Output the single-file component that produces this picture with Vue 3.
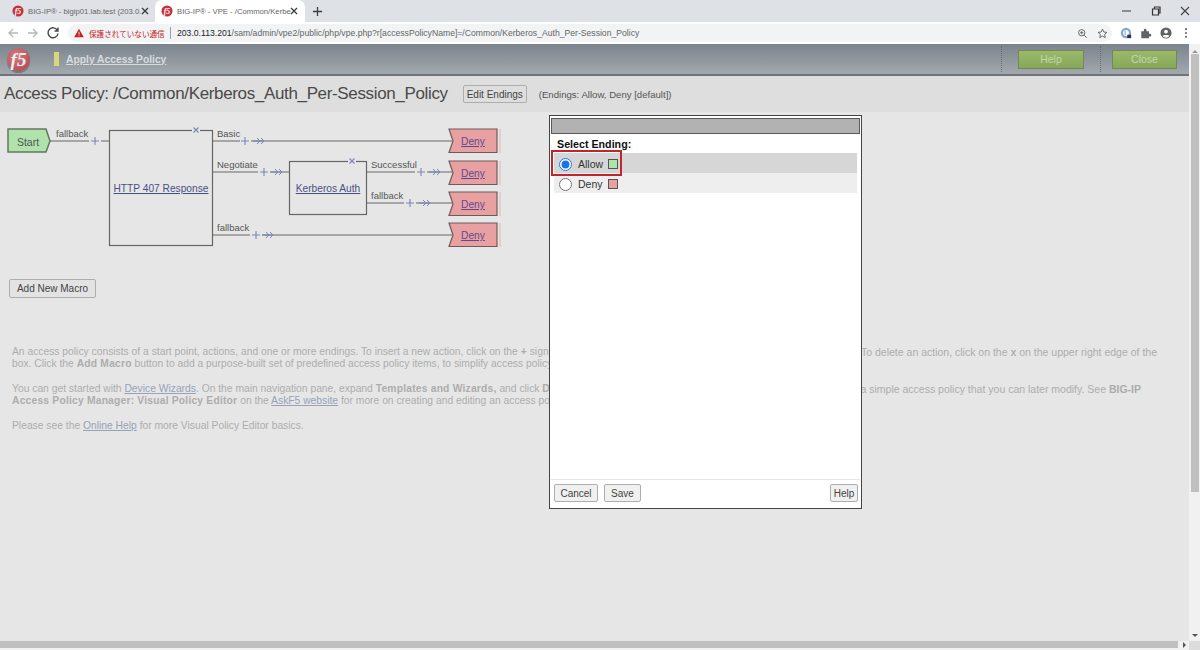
<script setup>
const wires = [
  [50,141,89,141],[101,141,109,141],
  [213,141,240,141],[251,141,452,141],
  [213,172,258,172],[270,172,289,172],
  [367,172,415,172],[427,172,452,172],
  [367,203,404,203],[416,203,452,203],
  [213,235,250,235],[262,235,452,235],
]
const pluses = [[95,141],[245,141],[264,172],[421,172],[410,203],[256,235]]
const arrows = [[258,141],[276,172],[434,172],[424,203],[267,235]]
const closers = [[196,130],[352,161]]
const labels = [
  ['fallback',56,137],['Basic',217,137],['Negotiate',217,168],['fallback',217,231],
  ['Successful',371,168],['fallback',371,199],
]
const denies = [129,161,192,223]
</script>

<template>
  <div class="screen">
    <div class="tabstrip">
      <div class="tab">
        <svg class="fav" viewBox="0 0 14 14"><circle cx="7" cy="7" r="6.5" fill="#c8303c"/><text x="7" y="10" text-anchor="middle" class="favtext">f5</text></svg>
        <span class="tabtitle">BIG-IP® - bigip01.lab.test (203.0.</span>
        <svg class="tabx" viewBox="0 0 10 10"><path d="M2 2l6 6M8 2l-6 6" stroke="#3c4043" stroke-width="1.4"/></svg>
      </div>
      <div class="tab active">
        <svg class="fav" viewBox="0 0 14 14"><circle cx="7" cy="7" r="6.5" fill="#c8303c"/><text x="7" y="10" text-anchor="middle" class="favtext">f5</text></svg>
        <span class="tabtitle">BIG-IP® - VPE - /Common/Kerbe</span>
        <svg class="tabx" viewBox="0 0 10 10"><path d="M2 2l6 6M8 2l-6 6" stroke="#3c4043" stroke-width="1.4"/></svg>
      </div>
      <svg class="newtab" viewBox="0 0 12 12"><path d="M6 1v10M1 6h10" stroke="#3c4043" stroke-width="1.4"/></svg>
      <div class="winctl">
        <svg viewBox="0 0 12 12"><path d="M1 6h9" stroke="#555" stroke-width="1.2"/></svg>
        <svg viewBox="0 0 12 12"><path d="M2.5 4h6v6h-6zM4.5 4V2h5.5v6h-1.5" fill="none" stroke="#333" stroke-width="1.2"/></svg>
        <svg viewBox="0 0 12 12"><path d="M2 2l8 8M10 2l-8 8" stroke="#444" stroke-width="1.1"/></svg>
      </div>
    </div>

    <div class="toolbar">
      <svg class="navicon" viewBox="0 0 14 14"><path d="M12 7H3M7 3L3 7l4 4" fill="none" stroke="#b4b7bb" stroke-width="1.4"/></svg>
      <svg class="navicon" viewBox="0 0 14 14"><path d="M2 7h9M7 3l4 4-4 4" fill="none" stroke="#b4b7bb" stroke-width="1.4"/></svg>
      <svg class="navicon" viewBox="0 0 14 14"><path d="M11.5 4.5A5 5 0 1 0 12 7.5M12 1.5v3.5H8.5" fill="none" stroke="#44474b" stroke-width="1.4"/></svg>
      <div class="omnibox">
        <svg class="warn" viewBox="0 0 12 11"><path d="M6 0.5L11.7 10.5H0.3z" fill="#c5221f"/><path d="M6 4v3.4M6 8.2v1.1" stroke="#fff" stroke-width="1"/></svg>
        <span class="insecure">保護されていない通信</span>
        <span class="omnisep"></span>
        <span class="url"><span class="urlhost">203.0.113.201</span>/sam/admin/vpe2/public/php/vpe.php?r[accessPolicyName]=/Common/Kerberos_Auth_Per-Session_Policy</span>
        <svg class="omniicon first" viewBox="0 0 14 14"><circle cx="6" cy="6" r="4" fill="none" stroke="#555" stroke-width="1.1"/><path d="M9 9l3.5 3.5M4 6h4M6 4v4" stroke="#555" stroke-width="1.1"/></svg>
        <svg class="omniicon" viewBox="0 0 14 14"><path d="M7 1.5l1.7 3.6 3.9.5-2.9 2.7.8 3.9L7 10.3l-3.5 1.9.8-3.9L1.4 5.600l3.900-.5z" fill="none" stroke="#555" stroke-width="1.1"/></svg>
      </div>
      <div class="exts">
        <svg viewBox="0 0 14 14"><circle cx="7" cy="7" r="6" fill="#7da7d8"/><circle cx="7" cy="7" r="3.4" fill="#fff"/><path d="M6 4.500v5" stroke="#7da7d8" stroke-width="1.200"/><rect x="8.500" y="9" width="4.500" height="4" fill="#333"/></svg>
        <svg viewBox="0 0 14 14"><path d="M1.500 5h3V3.500a1.500 1.500 0 0 1 3 0V5h3v3h1.200a1.500 1.500 0 0 1 0 3H10.500v2h-9z" fill="#5f6368"/></svg>
        <svg viewBox="0 0 14 14"><circle cx="7" cy="7" r="6.500" fill="#5f6368"/><circle cx="7" cy="5.300" r="2.200" fill="#fff"/><path d="M3 10.500c1-1.700 7-1.700 8 0a5 5 0 0 1-8 0z" fill="#fff"/></svg>
        <svg viewBox="0 0 14 14"><circle cx="7" cy="2.500" r="1.200" fill="#5f6368"/><circle cx="7" cy="7" r="1.200" fill="#5f6368"/><circle cx="7" cy="11.500" r="1.200" fill="#5f6368"/></svg>
      </div>
    </div>

    <div class="viewport">
      <div class="page">
        <header class="apphead">
          <div class="logo"><span>f5</span></div>
          <span class="applybar"></span>
          <a class="apply">Apply Access Policy</a>
          <span class="dots first"></span>
          <button class="greenbtn">Help</button>
          <span class="dots second"></span>
          <button class="greenbtn close">Close</button>
        </header>

        <div class="titlerow">
          <h1>Access Policy: /Common/Kerberos_Auth_Per-Session_Policy</h1>
          <button class="btn edit">Edit Endings</button>
          <span class="endings">(Endings: Allow, Deny [default])</span>
        </div>

        <svg class="diagram" viewBox="0 112 510 160" width="510" height="160">
          <polygon points="8,129 46,129 50,141 46,152 8,152" class="start"/>
          <text x="28" y="145.500" text-anchor="middle" class="startlbl">Start</text>
          <line v-for="(w,i) in wires" :key="'w'+i" :x1="w[0]" :y1="w[1]" :x2="w[2]" :y2="w[3]" class="wire"/>
          <rect x="109.500" y="130.500" width="103" height="115" class="box"/>
          <rect x="289.500" y="161.500" width="77" height="53" class="box"/>
          <text x="161" y="192" text-anchor="middle" class="link">HTTP 407 Response</text>
          <text x="328" y="192" text-anchor="middle" class="link">Kerberos Auth</text>
          <text v-for="(l,i) in labels" :key="'l'+i" :x="l[1]" :y="l[2]" class="lbl">{{ l[0] }}</text>
          <path v-for="(p,i) in pluses" :key="'p'+i" :d="`M${p[0]-4} ${p[1]}h8M${p[0]} ${p[1]-4}v8`" class="blue"/>
          <path v-for="(a,i) in arrows" :key="'a'+i" :d="`M${a[0]-5} ${a[1]}h11M${a[0]-1} ${a[1]-3}l3 3-3 3M${a[0]+3} ${a[1]-3}l3 3-3 3`" class="blue arrow"/>
          <g v-for="(c,i) in closers" :key="'c'+i">
            <rect :x="c[0]-4" :y="c[1]-2" width="8" height="4" fill="#e6e6e6"/>
            <path :d="`M${c[0]-2.500} ${c[1]-2.500}l5 5M${c[0]+2.500} ${c[1]-2.500}l-5 5`" class="blue"/>
          </g>
          <g v-for="y in denies" :key="y">
            <polygon :points="`449,${y} 497,${y} 497,${y+23.500} 449,${y+23.500} 453,${y+12}`" class="deny"/>
            <line x1="500" :y1="y" x2="500" :y2="y+24" class="tick"/>
            <text x="473" :y="y+16" text-anchor="middle" class="denylink">Deny</text>
          </g>
        </svg>

        <button class="btn macro">Add New Macro</button>

        <div class="help">
          <p>
            <span class="line"><span>An access policy consists of a start point, actions, and one or more endings. To insert a new action, click on the <b>+</b> sign</span><span>To delete an action, click on the <b>x</b> on the upper right edge of the</span></span>
            <span class="line"><span>box. Click the <b>Add Macro</b> button to add a purpose-built set of predefined access policy items, to simplify access policy</span></span>
          </p>
          <p>
            <span class="line short"><span>You can get started with <a>Device Wizards</a>. On the main navigation pane, expand <b>Templates and Wizards,</b> and click <b>Device</b></span><span>a simple access policy that you can later modify. See <b>BIG-IP</b></span></span>
            <span class="line"><span><b>Access Policy Manager: Visual Policy Editor</b> on the <a>AskF5 website</a> for more on creating and editing an access policy</span></span>
          </p>
          <p>
            <span class="line"><span>Please see the <a>Online Help</a> for more Visual Policy Editor basics.</span></span>
          </p>
        </div>

        <div class="dialog">
          <div class="dlgtitle"></div>
          <div class="dlgbody">
            <div class="selhead">Select Ending:</div>
            <label class="opt selected">
              <input type="radio" name="ending" checked>
              <span>Allow</span><i class="swatch green"></i>
            </label>
            <label class="opt">
              <input type="radio" name="ending">
              <span>Deny</span><i class="swatch red"></i>
            </label>
            <div class="redbox"></div>
          </div>
          <div class="dlgfoot">
            <button class="btn cancel">Cancel</button>
            <button class="btn save">Save</button>
            <button class="btn helpbtn">Help</button>
          </div>
        </div>
      </div>

      <div class="vscroll">
        <svg viewBox="0 0 8 5"><path d="M1 4l3-3 3 3z" fill="#999"/></svg>
        <div class="vthumb"></div>
        <svg viewBox="0 0 8 5"><path d="M1 1l3 3 3-3z" fill="#555"/></svg>
      </div>
    </div>

    <div class="hscroll">
      <div class="hthumb"></div>
      <svg viewBox="0 0 5 8"><path d="M1 1l3 3-3 3z" fill="#555"/></svg>
      <div class="corner"></div>
    </div>
  </div>
</template>

<style scoped>
.screen { width: 1200px; height: 650px; display: flex; flex-direction: column; overflow: hidden; background: #e6e6e6; font-family: "Liberation Sans", Arial, sans-serif; }

.tabstrip { height: 22px; flex: none; background: #dee1e6; display: flex; align-items: center; padding-left: 6px; }
.tab { width: 150px; height: 22px; padding-left: 6px; display: flex; align-items: center; box-sizing: border-box; border-radius: 7px 7px 0 0; flex: none; }
.tab.active { background: #fff; margin-left: -1px; width: 150px; }
.fav { width: 12px; height: 12px; flex: none; }
.favtext { font: italic bold 9px "Liberation Serif", serif; fill: #fff; }
.tabtitle { margin-left: 4px; width: 108px; font-size: 7.700px; color: #666; white-space: nowrap; flex: none; }
.tabx { width: 10px; height: 10px; margin-left: 4px; flex: none; }
.newtab { width: 11px; height: 11px; margin-left: 7px; }
.winctl { margin-left: auto; display: flex; gap: 17px; padding-right: 9px; }
.winctl svg { width: 12px; height: 12px; }

.toolbar { height: 22px; flex: none; background: #fff; display: flex; align-items: center; padding-left: 6px; box-sizing: border-box; }
.navicon { width: 14px; height: 14px; margin-right: 6px; flex: none; }
.omnibox { margin-left: 2px; width: 1044px; height: 18px; box-sizing: border-box; background: #f1f3f4; border-radius: 9px; display: flex; align-items: center; padding: 0 4px 0 6px; flex: none; }
.warn { width: 10px; height: 10px; flex: none; }
.insecure { margin-left: 5px; font: 7.600px "Noto Sans CJK JP", sans-serif; color: #c5221f; white-space: nowrap; width: 76px; flex: none; }
.omnisep { width: 1px; height: 12px; background: #9aa0a6; margin: 0 6px 0 5px; flex: none; }
.url { font-size: 8.630px; color: #666; white-space: nowrap; }
.urlhost { color: #222; }
.omniicon { width: 11px; height: 11px; margin-left: 9px; flex: none; }
.omniicon.first { margin-left: auto; }
.exts { display: flex; gap: 8px; margin-left: 8px; }
.exts svg { width: 12px; height: 12px; }

.viewport { flex: 1; min-height: 0; display: flex; }
.page { flex: 1; min-width: 0; position: relative; overflow: hidden; background: #e6e6e6; }

.apphead { height: 32px; box-sizing: border-box; background: linear-gradient(#7b838d, #a2a9af); border-bottom: 2px solid #70757b; display: flex; align-items: center; padding-left: 7px; padding-right: 12px; }
.logo { width: 23px; height: 23px; border-radius: 50%; background: radial-gradient(circle at 40% 35%, #d77a80, #a8444c); display: flex; align-items: center; justify-content: center; flex: none; box-shadow: 0 2px 1px #777; }
.logo span { font: italic bold 19px "Liberation Serif", serif; color: #eee; line-height: 1; }
.applybar { width: 5px; height: 14px; margin-left: 24px; background: #d8d878; flex: none; }
.apply { margin-left: 7px; font-size: 10.300px; font-weight: bold; color: #d8dce0; text-decoration: underline; }
.dots { height: 26px; border-left: 1px dotted #666f78; flex: none; }
.dots.first { margin-left: auto; margin-right: 16px; }
.dots.second { margin-left: 16px; margin-right: 11px; }
.greenbtn { width: 66px; height: 19px; padding: 0; border: 1px solid #76884f; background: linear-gradient(#9ab96a, #86a75a); color: #c5d5ae; font: 10.500px "Liberation Sans", sans-serif; flex: none; }
.greenbtn.close { width: 65px; }

.titlerow { height: 36px; background: #dedede; display: flex; align-items: center; padding-left: 4px; }
h1 { margin: 0; font-size: 17px; letter-spacing: -0.35px; font-weight: normal; color: #4a4a4a; white-space: nowrap; }
.btn { height: 18px; padding: 0 6px; box-sizing: border-box; border: 1px solid #adadad; border-radius: 2px; background: #e3e3e3; color: #444; font: 10px "Liberation Sans", sans-serif; white-space: nowrap; }
.edit { margin-left: 15px; width: 64px; padding: 0; background: #dedede; }
.endings { margin-left: 12px; font-size: 9.600px; color: #555; }

.diagram { display: block; font-family: "Liberation Sans", sans-serif; }
.start { fill: #b0e2ac; stroke: #5f7a5f; stroke-width: 1.500; }
.startlbl { font-size: 10.500px; fill: #555; }
.lbl { font-size: 9.500px; fill: #555; }
.wire { stroke: #666; stroke-width: 1; }
.box { fill: #e6e6e6; stroke: #666; stroke-width: 1.200; }
.link { font-size: 10.200px; fill: #4a4f85; text-decoration: underline; }
.blue { stroke: #7a86b8; stroke-width: 1.100; fill: none; }
.arrow { stroke-width: 1; }
.deny { fill: #e8a0a0; stroke: #6f5a5a; stroke-width: 1.200; }
.tick { stroke: #e2b4b4; stroke-width: 1; }
.denylink { font-size: 10.200px; fill: #5f4a95; text-decoration: underline; }

.macro { display: block; margin: 7px 0 0 9px; width: 87px; height: 19px; padding: 0; }

.help { margin: 47.500px 32px 0 12px; color: #adadad; font-size: 10.500px; line-height: 12.500px; }
.help p { margin: 0 0 12px; }
.line { display: flex; justify-content: space-between; white-space: nowrap; }
.line.short { padding-right: 16px; }
.line > span:first-child { font-size: 10.300px; }
.line > span:first-child b { letter-spacing: 0.2px; }
.help a { color: #95a3ba; text-decoration: underline; }

.dialog { position: absolute; left: 549px; top: 71px; width: 313px; height: 394px; box-sizing: border-box; border: 1px solid #444; background: #fff; padding: 2px 1px 0; display: flex; flex-direction: column; }
.dlgtitle { height: 16px; box-sizing: border-box; background: #b2b2b2; border: 1px solid #5a5a5a; flex: none; }
.dlgbody { flex: 1; position: relative; padding: 0 3px; }
.selhead { font-size: 10.700px; font-weight: bold; color: #111; padding: 4px 3px 0; height: 19px; box-sizing: border-box; }
.opt { display: flex; align-items: center; height: 20px; box-sizing: border-box; padding-top: 2px; background: #eeeeee; font-size: 10.500px; color: #333; }
.opt.selected { background: #d6d6d6; }
.opt input { width: 13px; height: 13px; margin: 0 6px 0 5px; accent-color: #1a73e8; }
.swatch { width: 8px; height: 8px; margin-left: 5px; border: 1px solid #555; }
.green { background: #b0e2ac; }
.red { background: #e8a0a0; }
.redbox { position: absolute; left: 0; top: 16px; width: 71px; height: 26px; box-sizing: border-box; border: 2px solid #c0272d; }
.dlgfoot { height: 29px; flex: none; border-top: 1px solid #e6e6e6; display: flex; align-items: flex-start; gap: 6px; padding: 4px 2px 0 3px; box-sizing: border-box; }
.dlgfoot .btn { background: #f0f0f0; padding: 0; }
.dlgfoot .cancel { width: 44px; }
.dlgfoot .save { width: 37px; }
.dlgfoot .helpbtn { width: 28px; margin-left: auto; }

.vscroll { width: 11px; flex: none; background: #f1f1f1; display: flex; flex-direction: column; align-items: center; padding: 5px 0 3px; box-sizing: border-box; }
.vscroll svg { width: 8px; height: 5px; flex: none; }
.vthumb { width: 8px; height: 438px; margin-top: 0; background: #c0c0c0; flex: none; }
.vscroll svg:last-child { margin-top: auto; }

.hscroll { height: 9px; flex: none; background: #f1f1f1; display: flex; align-items: stretch; }
.hthumb { width: 1178px; background: #c0c0c0; margin-bottom: 2px; flex: none; }
.hscroll svg { width: 5px; height: 8px; margin-left: 4px; flex: none; }
.corner { margin-left: auto; width: 11px; background: #dcdcdc; }
</style>
